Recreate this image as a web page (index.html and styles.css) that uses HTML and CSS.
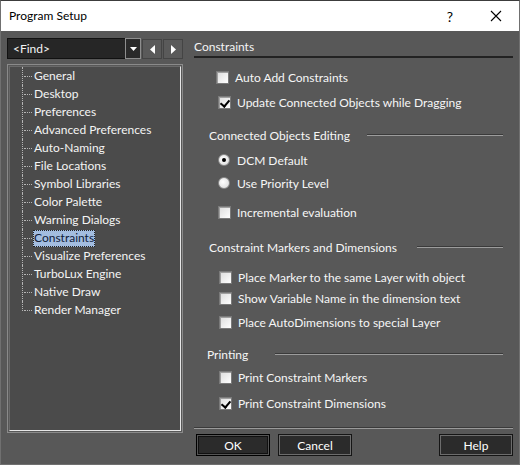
FILE: index.html
```html
<!DOCTYPE html>
<html>
<head>
<meta charset="utf-8">
<title>Program Setup</title>
<link rel="stylesheet" href="styles.css">
</head>
<body>
<div class="window">
  <header class="titlebar">
    <span class="title">Program Setup</span>
    <span class="help-btn">?</span>
    <span class="close-btn">
      <svg width="12" height="12" viewBox="0 0 12 12"><path d="M1 1L11 11M11 1L1 11" stroke="#000" stroke-width="1.1"/></svg>
    </span>
  </header>

  <div class="body">
    <aside class="nav">
      <div class="nav-bar">
        <div class="combo">
          <span class="combo-text">&lt;Find&gt;</span>
          <span class="combo-drop">
            <svg width="7" height="4" viewBox="0 0 7 4"><path d="M0 0H7L3.5 4Z" fill="#fff"/></svg>
          </span>
        </div>
        <span class="arrow-btn">
          <svg width="5" height="9" viewBox="0 0 5 9"><path d="M5 0V9L0 4.5Z" fill="#fff"/></svg>
        </span>
        <span class="arrow-btn">
          <svg width="5" height="9" viewBox="0 0 5 9"><path d="M0 0V9L5 4.5Z" fill="#fff"/></svg>
        </span>
      </div>
      <div class="tree">
        <ul>
          <li><span class="branch"></span><span class="label">General</span></li>
          <li><span class="branch"></span><span class="label">Desktop</span></li>
          <li><span class="branch"></span><span class="label">Preferences</span></li>
          <li><span class="branch"></span><span class="label">Advanced Preferences</span></li>
          <li><span class="branch"></span><span class="label">Auto-Naming</span></li>
          <li><span class="branch"></span><span class="label">File Locations</span></li>
          <li><span class="branch"></span><span class="label">Symbol Libraries</span></li>
          <li><span class="branch"></span><span class="label">Color Palette</span></li>
          <li><span class="branch"></span><span class="label">Warning Dialogs</span></li>
          <li class="selected"><span class="branch"></span><span class="label">Constraints</span></li>
          <li><span class="branch"></span><span class="label">Visualize Preferences</span></li>
          <li><span class="branch"></span><span class="label">TurboLux Engine</span></li>
          <li><span class="branch"></span><span class="label">Native Draw</span></li>
          <li class="last"><span class="branch"></span><span class="label">Render Manager</span></li>
        </ul>
      </div>
    </aside>

    <main class="page">
      <h1 class="page-title">Constraints</h1>

      <div class="options">
        <label class="check first"><span class="box"></span>Auto Add Constraints</label>
        <label class="check r2 checked"><span class="box"></span>Update Connected Objects while Dragging</label>

        <div class="group-head g1">Connected Objects Editing<span class="rule"></span></div>
        <label class="radio r1 checked"><span class="dot"></span>DCM Default</label>
        <label class="radio r2b"><span class="dot"></span>Use Priority Level</label>
        <label class="check r3"><span class="box"></span>Incremental evaluation</label>

        <div class="group-head g2">Constraint Markers and Dimensions<span class="rule"></span></div>
        <label class="check r4"><span class="box"></span>Place Marker to the same Layer with object</label>
        <label class="check r5"><span class="box"></span>Show Variable Name in the dimension text</label>
        <label class="check r6"><span class="box"></span>Place AutoDimensions to special Layer</label>

        <div class="group-head g3">Printing<span class="rule"></span></div>
        <label class="check r7"><span class="box"></span>Print Constraint Markers</label>
        <label class="check r8 checked"><span class="box"></span>Print Constraint Dimensions</label>
      </div>

      <footer class="buttons">
        <button class="btn default">OK</button>
        <button class="btn">Cancel</button>
        <span class="spacer"></span>
        <button class="btn">Help</button>
      </footer>
    </main>
  </div>
</div>
</body>
</html>
```

FILE: styles.css
```css
* { box-sizing: border-box; }

html, body {
  margin: 0;
  padding: 0;
  background: #585858;
}

body {
  font-family: "Lato", "Noto Sans", sans-serif;
  font-size: 12px;
  color: #f6f6f6;
}

.window {
  width: 520px;
  height: 465px;
  border: 1px solid #707070;
  border-top-color: #3c3c3c;
  background: #585858;
  display: flex;
  flex-direction: column;
}

/* ---- title bar ---- */
.titlebar {
  height: 30px;
  background: #ffffff;
  display: flex;
  align-items: center;
  color: #000;
  font-size: 12px;
  flex-shrink: 0;
}
.title { margin-left: 8px; flex: 1; margin-top: -1px; }
.help-btn {
  width: 46px;
  text-align: center;
  font-size: 14px;
}
.close-btn {
  width: 46px;
  display: flex;
  justify-content: center;
  align-items: center;
}

/* ---- dialog body ---- */
.body {
  flex: 1;
  display: flex;
  padding: 7px 6px 0 6px;
  gap: 11px;
}

.nav {
  width: 176px;
  display: flex;
  flex-direction: column;
}

.nav-bar {
  display: flex;
  height: 21px;
  gap: 1px;
}

.combo {
  width: 134px;
  display: flex;
  background: #262626;
  border: 1px solid #111;
}
.combo-text {
  flex: 1;
  padding-left: 5px;
  line-height: 19px;
  color: #f4f4f4;
}
.combo-drop {
  width: 16px;
  margin: -1px -1px -1px 0;
  border: 1px solid #8e8e8e;
  background: #2a2a2a;
  display: flex;
  align-items: center;
  justify-content: center;
}

.arrow-btn {
  width: 20px;
  height: 20px;
  margin-top: 1px;
  border: 1px solid #444;
  background: #5a5a5a;
  display: flex;
  align-items: center;
  justify-content: center;
}

/* ---- tree ---- */
.tree {
  margin-top: 5px;
  height: 369px;
  border: 1px solid #8a8a8a;
  padding: 1px;
  background: #585858;
}
.tree ul {
  margin: 0;
  height: 100%;
  list-style: none;
  padding: 0 0 0 12px;
  background: #4b4b4b;
  border: 1px solid #e6e6e6;
  border-top-color: #6a6a6a;
  border-left-color: #6a6a6a;
}
.tree li {
  display: flex;
  height: 18px;
  align-items: stretch;
}
.branch {
  width: 11px;
  border-left: 1px dotted #b5b5b5;
  display: flex;
  align-items: center;
}
.branch::after {
  content: "";
  flex: 1;
  margin-left: 1px;
  margin-right: 1px;
  border-top: 1px dotted #b5b5b5;
}
.tree li.last .branch {
  height: 10px;
  align-items: flex-end;
}
.label {
  padding: 0 1px;
  line-height: 17px;
  height: 17px;
  margin-top: 0;
  white-space: nowrap;
  color: #f4f4f4;
}
.tree li.selected .label {
  margin-top: 1px;
  line-height: 16px;
  background: #a3bde0;
  color: #10203a;
  outline: 1px dotted #222;
  outline-offset: -1px;
}

/* ---- right page ---- */
.page {
  flex: 1;
  display: flex;
  flex-direction: column;
}
.page-title {
  margin: 0;
  font-size: 12px;
  font-weight: normal;
  height: 20px;
  line-height: 17px;
  border-bottom: 2px solid #222;
  color: #f4f4f4;
}

.options {
  display: flex;
  flex-direction: column;
  padding-right: 10px;
}

.check, .radio {
  display: flex;
  align-items: center;
  height: 20px;
  padding-left: 24px;
  white-space: nowrap;
}

.box {
  width: 13px;
  height: 13px;
  margin-right: 6px;
  border: 1px solid #7a7a7a;
  background: linear-gradient(135deg, #dcdcdc, #ffffff);
  box-shadow: inset 1px 1px 0 #a0a0a0;
  position: relative;
  flex-shrink: 0;
}
.check.checked .box::after {
  content: "";
  position: absolute;
  left: 3px;
  top: 1px;
  width: 4px;
  height: 7px;
  border-right: 2px solid #000;
  border-bottom: 2px solid #000;
  transform: rotate(40deg);
}

.dot {
  width: 12px;
  height: 12px;
  margin-right: 7px;
  border-radius: 50%;
  background: radial-gradient(circle at 40% 40%, #ffffff, #d6d6d6);
  border: 1px solid #8a8a8a;
  display: flex;
  align-items: center;
  justify-content: center;
  flex-shrink: 0;
}
.radio.checked .dot::after {
  content: "";
  width: 4px;
  height: 4px;
  border-radius: 50%;
  background: #000;
}

.group-head {
  display: flex;
  align-items: center;
  height: 20px;
  padding-left: 15px;
  white-space: nowrap;
}
.group-head .rule {
  flex: 1;
  height: 2px;
  border-top: 1px solid #3a3a3a;
  background: #9c9c9c;
}
.g1 .rule { margin-left: 17px; }
.g2 .rule { margin-left: 20px; }
.g3 { padding-left: 13px; }
.g3 .rule { margin-left: 27px; }

/* vertical rhythm of the option rows */
.first { margin-top: 9px; padding-left: 22px; }
.r2 { margin-top: 5px; }
.g1 { margin-top: 13px; }
.r1 { margin-top: 5px; }
.r2b { margin-top: 3px; }
.r3 { margin-top: 9px; }
.g2 { margin-top: 15px; }
.r4 { margin-top: 10px; }
.r5 { margin-top: 1px; }
.r6 { margin-top: 4px; }
.g3 { margin-top: 12px; }
.r7 { margin-top: 3px; }
.r8 { margin-top: 6px; }
.r4, .r5, .r6, .r7, .r8 { padding-left: 25px; }

/* ---- buttons ---- */
.buttons {
  margin-top: 14px;
  border-top: 1px solid #3a3a3a;
  box-shadow: inset 0 1px 0 #9a9a9a;
  padding: 6px 0 0 2px;
  display: flex;
  gap: 8px;
}
.spacer { flex: 1; }
.btn {
  width: 74px;
  height: 22px;
  font-family: inherit;
  font-size: 12px;
  color: #ffffff;
  background: #2b2b2b;
  border: 1px solid #151515;
  box-shadow: inset 0 0 0 1px #6c6c6c;
  padding: 0;
}
.btn.default {
  border: 1px solid #000;
  box-shadow: inset 0 0 0 1px #555, inset 0 0 0 2px #111;
}
```
